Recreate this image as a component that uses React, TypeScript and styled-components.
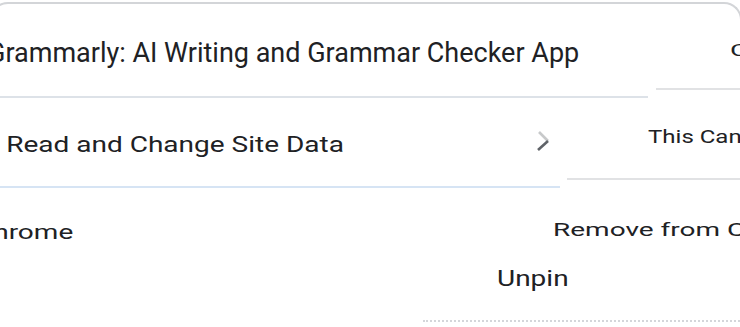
import React from 'react'
import styled, { createGlobalStyle } from 'styled-components'

const GlobalStyle = createGlobalStyle`
  html, body {
    margin: 0;
    padding: 0;
    background: #ffffff;
    overflow: hidden;
  }
  body {
    font-family: Roboto, "Noto Sans", "Liberation Sans", sans-serif;
    color: #202124;
  }
`

const Page = styled.div`
  position: relative;
  width: 740px;
  height: 327px;
  overflow: hidden;
  background: #ffffff;
`

const Frame = styled.div`
  box-sizing: border-box;
  width: 752px;
  height: 340px;
  margin: 2px 0 0 -10px;
  padding-left: 8px;
  border: 2px solid #d3d5d8;
  border-bottom: none;
  border-radius: 18px 18px 0 0;
`

const Menu = styled.div`
  display: flex;
  flex-direction: column;
  width: 740px;
`

const Row = styled.div<{ $height: number; $pad: number; $width?: number }>`
  display: flex;
  align-items: flex-start;
  box-sizing: border-box;
  height: ${p => p.$height}px;
  width: ${p => (p.$width ? `${p.$width}px` : '100%')};
  padding-top: ${p => p.$pad}px;
`

const Divider = styled.div<{ $width?: number; $indent?: number; $color: string }>`
  height: 2px;
  width: ${p => (p.$width ? `${p.$width}px` : 'auto')};
  margin-left: ${p => p.$indent ?? 0}px;
  background: ${p => p.$color};
`

const Label = styled.span<{ $shift?: number; $squash?: number; $size?: number }>`
  display: inline-block;
  flex-shrink: 0;
  font-size: ${p => p.$size ?? 28}px;
  line-height: 28px;
  font-weight: 400;
  white-space: nowrap;
  margin-left: ${p => p.$shift ?? 0}px;
  transform-origin: left 24px;
  transform: scaleY(${p => p.$squash ?? 1});
`

const Chevron = styled.svg`
  flex-shrink: 0;
  margin: -1px 8px 0 auto;
`

const Submenu = styled.div`
  position: absolute;
  top: 0;
  left: 420px;
  right: 0;
  height: 327px;
  display: flex;
  flex-direction: column;
`

const SubBottom = styled.div`
  position: relative;
  flex: 1;
  display: flex;
  flex-direction: column;

  &::before {
    content: '';
    position: absolute;
    top: 0;
    bottom: 0;
    left: 147px;
    right: 0;
    background: #f9fbfe;
    z-index: -1;
  }
`

const SubRow = styled.div<{ $height: number; $pad: number; $indent: number }>`
  display: flex;
  box-sizing: border-box;
  height: ${p => p.$height}px;
  padding: ${p => p.$pad}px 0 0 ${p => p.$indent}px;
`

const Dotted = styled.div`
  margin: 24px 0 0 3px;
  border-top: 2px dotted #d4d6da;
`

export default function App() {
  return (
    <Page>
      <GlobalStyle />
      <Frame>
        <Menu>
          <Row $height={92} $pad={35}>
            <Label $shift={-13} $size={27}>
              Grammarly: AI Writing and Grammar Checker App
            </Label>
          </Row>
          <Divider $width={648} $color="#dde2e8" />
          <Row $height={88} $pad={31} $width={560}>
            <Label $shift={-110} $squash={0.8}>
              This Can Read and Change Site Data
            </Label>
            <Chevron width="18" height="26" viewBox="0 0 18 26">
              <path d="M5 4 L14 13" stroke="#5f6368" strokeWidth="2.6" fill="none" opacity="0.35" />
              <path d="M14 13 L4 22" stroke="#5f6368" strokeWidth="2.6" fill="none" />
            </Chevron>
          </Row>
          <Divider $width={560} $color="#d6e4f4" />
          <Row $height={100} $pad={28}>
            <Label $shift={-25} $squash={0.75}>Chrome</Label>
          </Row>
        </Menu>
      </Frame>

      <Submenu>
        <SubRow $height={88} $pad={33} $indent={310}>
          <Label $squash={0.62}>Chrome</Label>
        </SubRow>
        <Divider $indent={236} $color="#e1e2e4" />
        <SubRow $height={88} $pad={31} $indent={228}>
          <Label $size={24} $squash={0.76}>This Can Read and Change Site Data</Label>
        </SubRow>
        <Divider $indent={147} $color="#e1e2e4" />
        <SubBottom>
          <SubRow $height={60} $pad={33} $indent={133}>
            <Label $squash={0.63}>Remove from Chrome</Label>
          </SubRow>
          <SubRow $height={56} $pad={23} $indent={77}>
            <Label $squash={0.78}>Unpin</Label>
          </SubRow>
          <Dotted />
        </SubBottom>
      </Submenu>
    </Page>
  )
}
